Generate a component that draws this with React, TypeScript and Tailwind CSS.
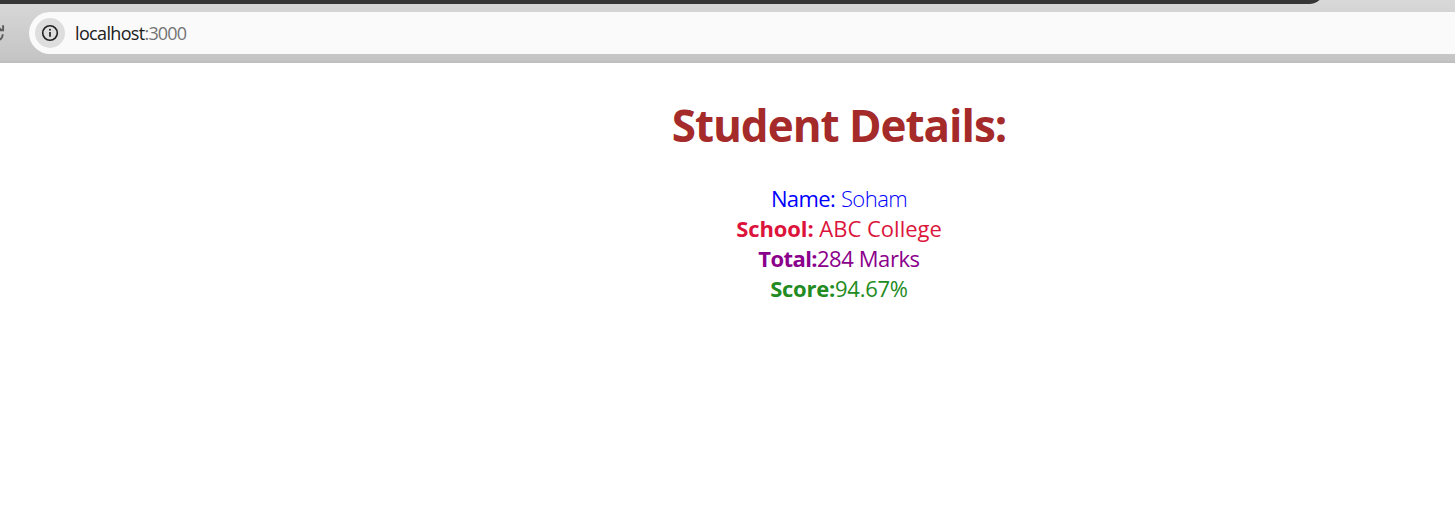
import type { ReactNode } from "react";

function ReloadIcon() {
  return (
    <svg className="h-[18px] w-[18px] shrink-0" viewBox="0 0 18 18" fill="none" stroke="#5c5c5c" strokeWidth="1.9">
      <path d="M14.4 6.2A6.7 6.7 0 1 0 15.7 10.2" />
      <path d="M16.1 1.2V6.2H11.4" />
    </svg>
  );
}

function InfoIcon() {
  return (
    <svg className="h-[18px] w-[18px]" viewBox="0 0 18 18" fill="none">
      <circle cx="9" cy="9" r="7.3" stroke="#222" strokeWidth="1.6" />
      <path d="M9 8V12.8" stroke="#222" strokeWidth="1.7" />
      <circle cx="9" cy="5.8" r="1" fill="#222" />
    </svg>
  );
}

function BrowserBar() {
  return (
    <header className="h-[63px] overflow-hidden border-b-2 border-[#bfbfbf] bg-linear-to-b from-[#d8d8d8] to-[#c4c4c4]">
      <div className="flex h-1 w-[1325px] items-end overflow-hidden">
        <div className="h-8 w-full shrink-0 rounded-br-[16px] bg-[#363636]" />
      </div>
      <div className="mt-2 flex h-[42px] items-center">
        <div className="-ml-[13px] w-[42px] shrink-0">
          <ReloadIcon />
        </div>
        <div className="flex h-[42px] flex-1 items-center rounded-l-full bg-[#fafafa] pl-1.5">
          <span className="flex h-[30px] w-[30px] items-center justify-center rounded-full bg-[#dedede]">
            <InfoIcon />
          </span>
          <span className="ml-2.5 text-[18px] leading-6 tracking-[-0.65px] text-[#202020]">
            localhost<span className="tracking-[-0.88px] text-[#747474]">:3000</span>
          </span>
        </div>
      </div>
    </header>
  );
}

function Detail({ className, children }: { className: string; children: ReactNode }) {
  return <div className={`whitespace-pre ${className}`}>{children}</div>;
}

export default function App() {
  return (
    <div className="h-[507px] overflow-hidden bg-white font-['Open_Sans','Noto_Sans',sans-serif]">
      <BrowserBar />
      <main className="ml-[223px] pt-8 text-center">
        <h1 className="text-[44px] leading-[60px] font-bold tracking-[-1.03px] text-[#a52a2a]">Student Details:</h1>
        <div className="mt-7 text-[22px] leading-[30px]">
          <Detail className="text-[#0000ff]">
            <span className="font-medium tracking-[-0.6px]">Name:</span> <span className="font-light tracking-[-0.55px]">Soham</span>
          </Detail>
          <Detail className="text-[#dc143c]">
            <b className="tracking-[-0.1px]">School:</b> ABC College
          </Detail>
          <Detail className="text-[#8b008b]">
            <b className="tracking-[-0.6px]">Total:</b><span className="tracking-[-0.42px]">284 Marks</span>
          </Detail>
          <Detail className="text-[#228b22]">
            <b className="tracking-[-0.25px]">Score:</b><span className="tracking-[-0.25px]">94.67%</span>
          </Detail>
        </div>
      </main>
    </div>
  );
}
